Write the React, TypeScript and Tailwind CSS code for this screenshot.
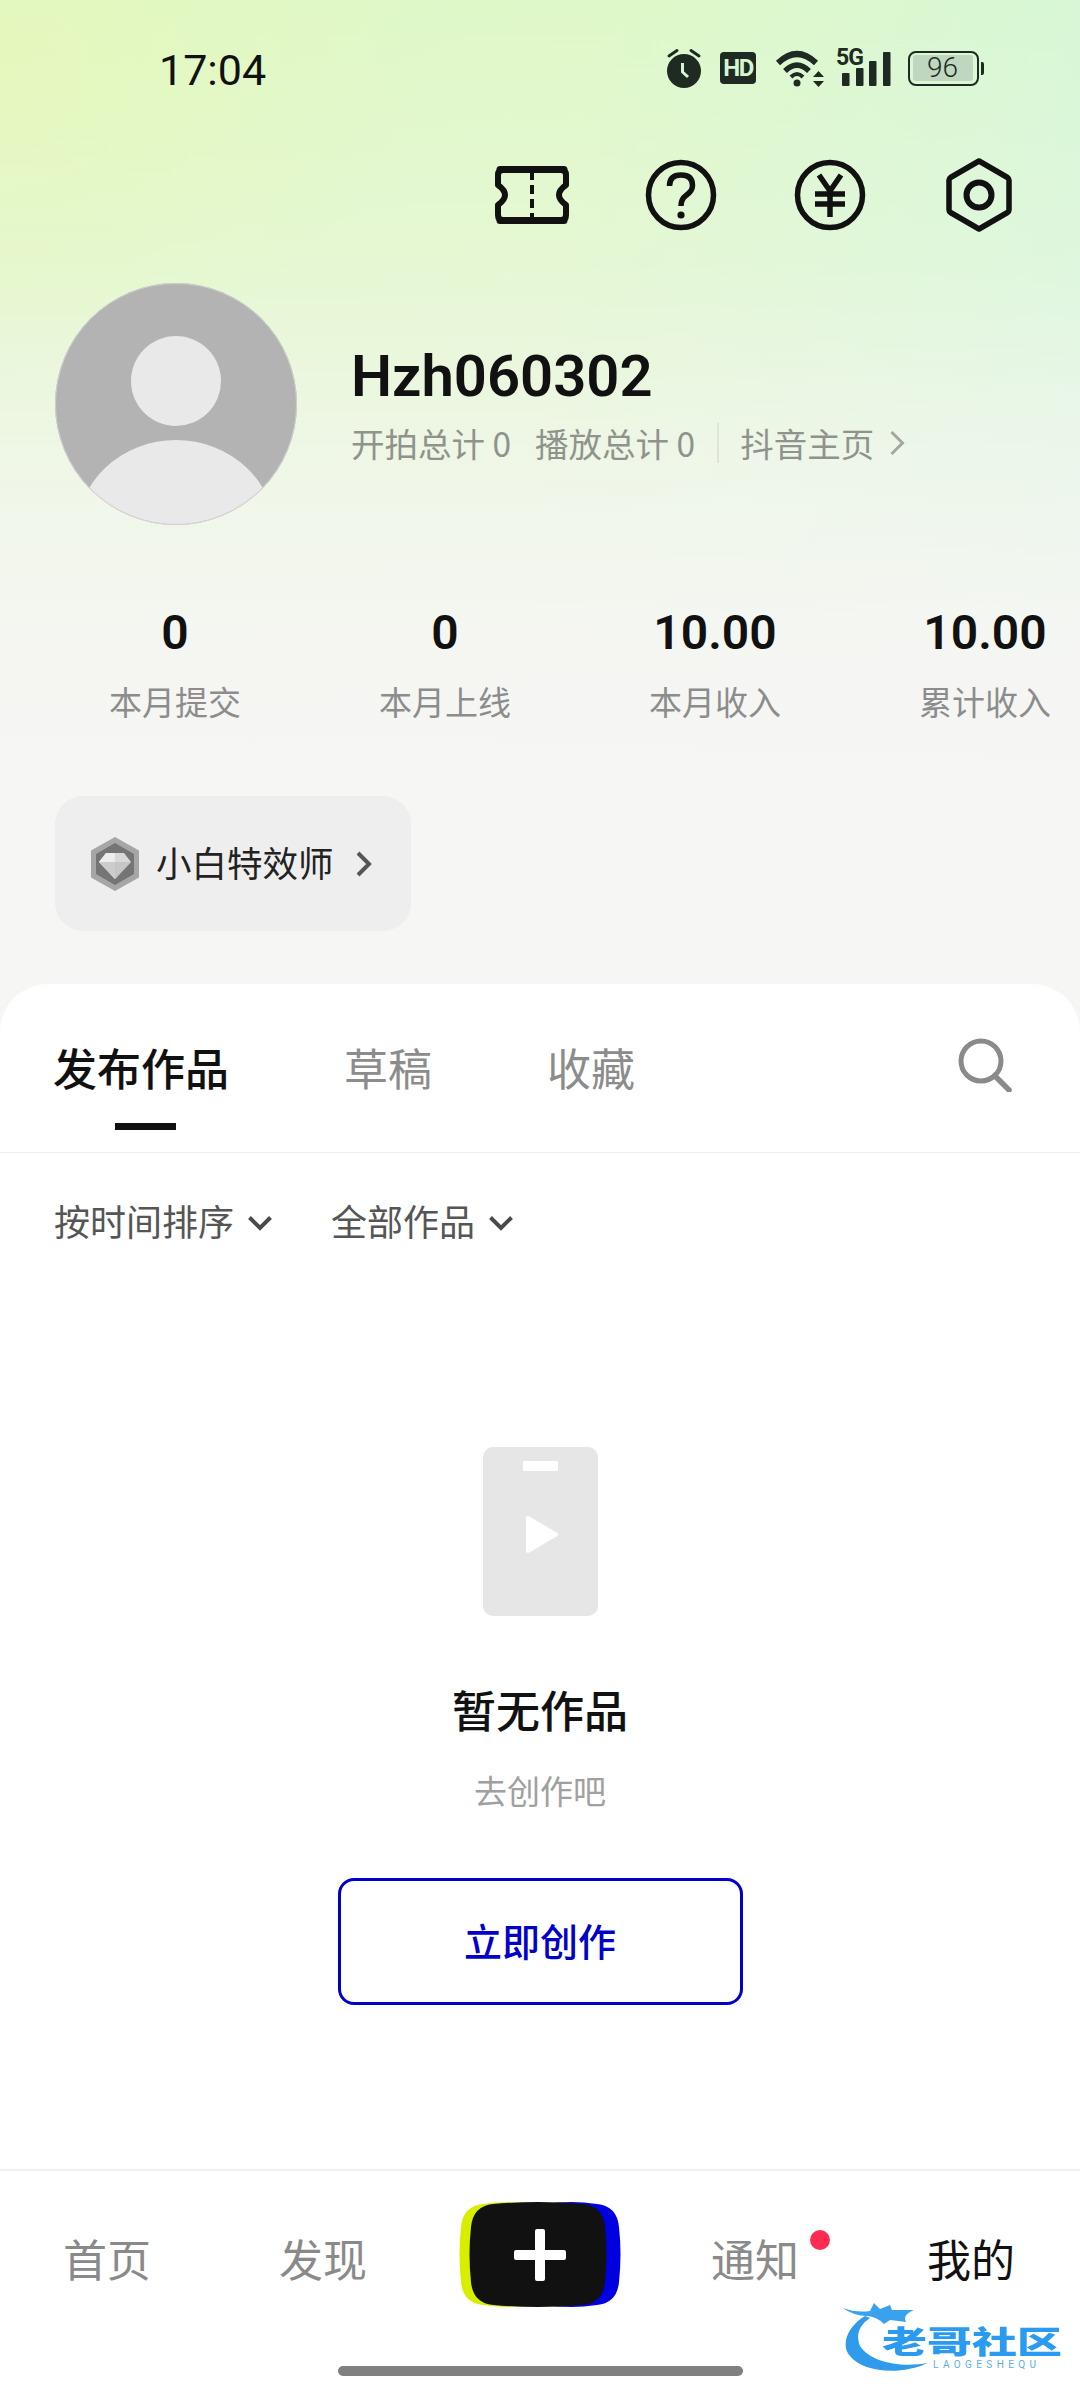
import React from "react";

const D = "#1e2a22";

function Alarm() {
  return (
    <svg width="36" height="40" viewBox="0 0 36 40" className="shrink-0">
      <circle cx="18" cy="23" r="17" fill={D} />
      <path d="M3 8 L11 2.5 M33 8 L25 2.5" stroke={D} strokeWidth="3" strokeLinecap="round" />
      <path d="M16.5 15 V24 L22 29" stroke="#d6f5d2" strokeWidth="3" fill="none" strokeLinejoin="round" />
    </svg>
  );
}

function HD() {
  return (
    <div className="flex h-[32px] w-[36px] shrink-0 items-center justify-center rounded-[4px] bg-[#1e2a22] text-[24px] leading-none font-bold tracking-[-1.5px] text-[#d6f5d2] [font-family:'Roboto',sans-serif]">
      HD
    </div>
  );
}

function Wifi() {
  return (
    <svg width="50" height="40" viewBox="0 0 50 40" className="shrink-0">
      <path d="M3 15 Q22 -3 41 15" stroke={D} strokeWidth="6" fill="none" />
      <path d="M10 23 Q22 11 34 23" stroke={D} strokeWidth="5.5" fill="none" />
      <path d="M16 29 Q22 23 28 29" stroke={D} strokeWidth="4" fill="none" />
      <circle cx="22" cy="35" r="3.5" fill={D} />
      <path d="M38 29 L49 29 L43.5 23 Z M38 33 L49 33 L43.5 39 Z" fill={D} />
    </svg>
  );
}

function Signal() {
  return (
    <svg width="54" height="36" viewBox="0 0 54 36" className="block shrink-0">
      <rect x="5" y="23" width="7.5" height="13" rx="1" fill={D} />
      <rect x="19" y="18" width="7.5" height="18" rx="1" fill={D} />
      <rect x="32" y="11" width="7.5" height="25" rx="1" fill={D} />
      <rect x="46" y="2" width="7.5" height="34" rx="1" fill={D} />
    </svg>
  );
}

function Battery() {
  return (
    <div className="flex shrink-0 items-center gap-[2px]">
      <div className="flex h-[35px] w-[71px] items-center rounded-[8px] border-[2.5px] border-[#1e2a22] p-[2.5px]">
        <div className="flex h-full w-[60px] items-center justify-center rounded-[3px] bg-[#bfd6bf] text-[28px] leading-none font-light text-[#1e2a22] [font-family:'Roboto',sans-serif]">
          96
        </div>
      </div>
      <div className="h-[13px] w-[3px] rounded-r-[2px] bg-[#1e2a22]" />
    </div>
  );
}

function Ticket() {
  return (
    <svg width="76" height="60" viewBox="0 0 76 60">
      <path
        d="M9 5 H67 Q72 5 72 10 V20 Q65 25 65 30 Q65 35 72 40 V50 Q72 55 67 55 H9 Q4 55 4 50 V40 Q11 35 11 30 Q11 25 4 20 V10 Q4 5 9 5 Z"
        fill="none"
        stroke="#111"
        strokeWidth="6"
        strokeLinejoin="round"
      />
      <path d="M6 4.5 H70 M6 55.5 H70" stroke="#111" strokeWidth="7" strokeLinecap="round" />
      <path d="M38 6 V55" stroke="#111" strokeWidth="4" strokeDasharray="9 5" />
    </svg>
  );
}

function Help() {
  return (
    <svg width="76" height="76" viewBox="0 0 76 76">
      <circle cx="38" cy="38" r="32.5" fill="none" stroke="#111" strokeWidth="5.5" />
      <path
        d="M26.5 29 Q26.5 18 38 18 Q49.5 18 49.5 28.5 Q49.5 34 43 38.5 Q38 42 38 49"
        fill="none"
        stroke="#111"
        strokeWidth="5.5"
      />
      <circle cx="38" cy="58" r="3.6" fill="#111" />
    </svg>
  );
}

function Yen() {
  return (
    <svg width="76" height="76" viewBox="0 0 76 76">
      <circle cx="38" cy="38" r="32.5" fill="none" stroke="#111" strokeWidth="5.5" />
      <path d="M27 18 L38 34 L49 18 M38 34 V60 M23 37 H53 M23 47 H53" fill="none" stroke="#111" strokeWidth="5.5" />
    </svg>
  );
}

function Gear() {
  return (
    <svg width="76" height="76" viewBox="0 0 76 76">
      <path d="M38 4 L66.5 20.5 Q68 21.5 68 23 V53 Q68 54.5 66.5 55.5 L38 72 L9.5 55.5 Q8 54.5 8 53 V23 Q8 21.5 9.5 20.5 Z" fill="none" stroke="#111" strokeWidth="5.5" strokeLinejoin="round" />
      <circle cx="38" cy="38" r="12.5" fill="none" stroke="#111" strokeWidth="6" />
    </svg>
  );
}

function Avatar() {
  return (
    <svg width="242" height="242" viewBox="0 0 242 242" className="shrink-0">
      <defs>
        <clipPath id="av">
          <circle cx="121" cy="121" r="121" />
        </clipPath>
      </defs>
      <circle cx="121" cy="121" r="121" fill="#b3b3b3" />
      <g clipPath="url(#av)">
        <ellipse cx="121" cy="98" rx="45" ry="45" fill="#e9e9e9" />
        <ellipse cx="121" cy="252" rx="100" ry="95" fill="#e9e9e9" />
      </g>
      <circle cx="121" cy="121" r="120.5" fill="none" stroke="#cfcfcf" strokeWidth="1" />
    </svg>
  );
}

function Chevron({ w, h, color, sw }: { w: number; h: number; color: string; sw: number }) {
  return (
    <svg width={w} height={h} viewBox="0 0 16 28" className="shrink-0">
      <path d="M2.5 3 L13.5 14 L2.5 25" fill="none" stroke={color} strokeWidth={sw} />
    </svg>
  );
}

function Down() {
  return (
    <svg width="26" height="16" viewBox="0 0 26 16" className="shrink-0">
      <path d="M2.5 2.5 L13 13 L23.5 2.5" fill="none" stroke="#4a4a4a" strokeWidth="4" />
    </svg>
  );
}

function Diamond() {
  return (
    <svg width="48" height="54" viewBox="0 0 48 54" className="shrink-0">
      <path d="M24 0 L48 13.5 V40.5 L24 54 L0 40.5 V13.5 Z" fill="#a6a6a6" />
      <path d="M24 6 L43 17 V37 L24 48 L5 37 V17 Z" fill="#757575" />
      <path d="M15 16 H33 L40 25 L24 42 L8 25 Z" fill="#d9d9d9" />
      <path d="M15 16 H24 V42 L8 25 Z" fill="#ededed" />
      <path d="M8 25 H40 L24 42 Z" fill="#bdbdbd" opacity="0.7" />
    </svg>
  );
}

function Stat({ n, l }: { n: string; l: string }) {
  return (
    <div className="flex flex-col items-center">
      <div className="h-[56px] text-[48px] leading-[56px] font-semibold text-[#111] [font-family:'Roboto',sans-serif]">{n}</div>
      <div className="mt-[18px] h-[44px] text-[33px] leading-[44px] whitespace-nowrap text-[#8c8c8c]">{l}</div>
    </div>
  );
}

function squircle(x0: number, x1: number) {
  const m = (x0 + x1) / 2;
  return `M${x0 + 24} 3 Q${m} -1 ${x1 - 24} 3 Q${x1 - 4} 5 ${x1 - 2} 26 Q${x1 + 1} 53 ${x1 - 2} 81 Q${x1 - 4} 102 ${x1 - 24} 104 Q${m} 108 ${x0 + 24} 104 Q${x0 + 4} 102 ${x0 + 2} 81 Q${x0 - 1} 53 ${x0 + 2} 26 Q${x0 + 4} 5 ${x0 + 24} 3 Z`;
}

function PlusButton() {
  return (
    <svg width="162" height="107" viewBox="0 0 162 107" className="overflow-visible">
      <path d={squircle(0, 100)} fill="#d8ee00" />
      <path d={squircle(62, 162)} fill="#0000e0" />
      <path d={squircle(10, 148)} fill="#111111" />
      <rect x="76" y="28" width="10" height="52" rx="2" fill="#fff" />
      <rect x="55" y="49" width="52" height="10" rx="2" fill="#fff" />
    </svg>
  );
}

function NavLabel({ t, active }: { t: string; active?: boolean }) {
  return (
    <div className={`mt-[27px] pr-[2px] text-center text-[44px] leading-[60px] ${active ? "text-[#111]" : "text-[#8a8a8a]"}`}>{t}</div>
  );
}

function Watermark() {
  return (
    <div className="absolute top-[2300px] left-[840px] h-[80px] w-[226px]">
      <svg width="110" height="80" viewBox="0 0 110 80" className="absolute top-0 left-0 blur-[0.6px]">
        <path d="M25 16 C8 26 0 45 10 56 C22 72 60 76 88 63 C60 68 30 62 20 46 C16 36 18 26 30 18 Z" fill="#2f9bea" />
        <path d="M3 8 Q16 13 30 11 L34 3 L40 9 L50 5 L52 10 L74 10 Q62 15 66 22 L50 20 L44 24 Q36 16 26 16 Q12 15 3 8 Z" fill="#3aa2ec" />
      </svg>
      <div className="absolute top-[22px] left-[42px] origin-center scale-y-[0.68] text-[45px] leading-[36px] font-black whitespace-nowrap text-[#2a9bf0]">
        老哥社区
      </div>
      <div className="absolute top-[60px] left-[93px] text-[10px] leading-[10px] tracking-[4.4px] whitespace-nowrap text-[#5aaee8] [font-family:'Roboto',sans-serif]">
        LAOGESHEQU
      </div>
    </div>
  );
}

export default function App() {
  return (
    <div className="relative flex h-[2400px] w-[1080px] flex-col overflow-hidden bg-[radial-gradient(ellipse_420px_300px_at_0px_60px,rgba(232,248,180,0.55),rgba(232,248,180,0)),linear-gradient(180deg,rgba(246,246,244,0)_0px,rgba(246,246,244,0.25)_260px,rgba(246,246,244,0.68)_450px,rgba(246,246,244,0.95)_640px,#f6f6f4_800px),linear-gradient(100deg,#dff8c6_0%,#dff8c8_40%,#d8f7d4_70%,#cef5e0_100%)] [font-family:'Noto_Sans_CJK_SC',sans-serif]">
      <div className="flex h-[136px] shrink-0 items-center justify-between pr-[96px] pl-[159px]">
        <div className="mt-[5px] text-[43px] leading-none text-[#111] [font-family:'Roboto',sans-serif]">17:04</div>
        <div className="flex items-center">
          <Alarm />
          <div className="ml-[18px]"><HD /></div>
          <div className="ml-[19px]"><Wifi /></div>
          <div className="relative ml-[12px]">
            <Signal />
            <span className="absolute top-[-4px] left-[-1px] text-[23px] leading-none font-bold tracking-[-1px] text-[#1e2a22] [font-family:'Roboto',sans-serif]">5G</span>
          </div>
          <div className="ml-[17px]"><Battery /></div>
        </div>
      </div>

      <div className="flex h-[118px] shrink-0 items-center justify-end gap-[73px] pr-[63px]">
        <Ticket />
        <Help />
        <Yen />
        <Gear />
      </div>

      <div className="mt-[29px] flex shrink-0 items-center px-[55px]">
        <Avatar />
        <div className="ml-[54px] flex flex-col">
          <div className="text-[58px] leading-[64px] font-semibold text-[#111] [font-family:'Roboto',sans-serif]">Hzh060302</div>
          <div className="mt-[13px] flex items-center text-[33.5px] leading-[44px] text-[#8f938c]">
            <span>开拍总计 0</span>
            <span className="ml-[24px]">播放总计 0</span>
            <span className="mr-[21px] ml-[22px] h-[40px] w-[2px] bg-[#dfe3da]" />
            <span>抖音主页</span>
            <span className="ml-[15px]"><Chevron w={16} h={28} color="#a3a79f" sw={3} /></span>
          </div>
        </div>
      </div>

      <div className="mt-[80px] grid w-[1080px] shrink-0 grid-cols-[270px_270px_270px_270px] pl-[40px]">
        <Stat n="0" l="本月提交" />
        <Stat n="0" l="本月上线" />
        <Stat n="10.00" l="本月收入" />
        <Stat n="10.00" l="累计收入" />
      </div>

      <div className="mt-[73px] ml-[55px] flex h-[135px] w-[356px] shrink-0 items-center rounded-[28px] bg-[#eeeeee] pl-[36px]">
        <Diamond />
        <span className="mt-[-3px] ml-[17px] text-[35.5px] leading-none whitespace-nowrap text-[#222]">小白特效师</span>
        <span className="ml-[21px]"><Chevron w={17} h={28} color="#555" sw={4} /></span>
      </div>

      <div className="mt-[53px] flex min-h-0 flex-1 flex-col rounded-t-[48px] bg-white">
        <div className="flex h-[169px] shrink-0 items-start justify-between border-b-[1px] border-[#eeeeee] pr-[68px] pl-[53px]">
          <div className="flex gap-[115px]">
            <div className="flex flex-col items-center pt-[53px]">
              <div className="h-[60px] text-[44px] leading-[60px] font-medium text-[#111]">发布作品</div>
              <div className="mt-[26px] ml-[8px] h-[7px] w-[61px] bg-[#111]" />
            </div>
            <div className="pt-[53px] text-[44px] leading-[60px] text-[#8c8c8c]">草稿</div>
            <div className="pt-[53px] text-[44px] leading-[60px] text-[#8c8c8c]">收藏</div>
          </div>
          <div className="pt-[54px]">
            <svg width="54" height="54" viewBox="0 0 54 54">
              <circle cx="23" cy="23" r="20" fill="none" stroke="#8a8a8a" strokeWidth="5" />
              <path d="M37 38 L51 52" stroke="#8a8a8a" strokeWidth="5.5" strokeLinecap="round" />
            </svg>
          </div>
        </div>

        <div className="flex h-[140px] shrink-0 items-center pr-[55px] pl-[54px] text-[36px] text-[#555]">
          <span className="mt-[-6px] leading-none">按时间排序</span>
          <span className="ml-[13px]"><Down /></span>
          <span className="mt-[-6px] ml-[58px] leading-none">全部作品</span>
          <span className="ml-[13px]"><Down /></span>
        </div>

        <div className="mt-[154px] flex shrink-0 flex-col items-center">
          <div className="relative flex h-[169px] w-[115px] items-center justify-center rounded-[10px] bg-[#e6e6e6]">
            <div className="absolute top-[14px] left-[40px] h-[10px] w-[35px] rounded-[1px] bg-white" />
            <svg width="34" height="39" viewBox="0 0 34 39" className="mt-[6px] ml-[4px]">
              <path d="M3 3 L31 19.5 L3 36 Z" fill="#fff" stroke="#fff" strokeWidth="4" strokeLinejoin="round" />
            </svg>
          </div>
          <div className="mt-[63px] h-[60px] text-[44px] leading-[60px] font-medium text-[#111]">暂无作品</div>
          <div className="mt-[29px] h-[44px] text-[33px] leading-[44px] text-[#a0a0a0]">去创作吧</div>
          <div className="mt-[66px] flex h-[127px] w-[405px] items-center justify-center rounded-[16px] border-[3px] border-[#0000c8] pb-[4px] text-[38px] font-medium text-[#0000c8]">
            立即创作
          </div>
        </div>

        <div className="mt-auto flex h-[231px] shrink-0 flex-col border-t-[2px] border-[#f0f0f0]">
          <div className="grid h-[195px] grid-cols-5 pt-[30px]">
            <NavLabel t="首页" />
            <NavLabel t="发现" />
            <div className="flex justify-center"><PlusButton /></div>
            <div className="relative">
              <NavLabel t="通知" />
              <div className="absolute top-[29px] left-[162px] h-[20px] w-[20px] rounded-full bg-[#fe2c55]" />
            </div>
            <NavLabel t="我的" active />
          </div>
          <div className="h-[10px] w-[405px] self-center rounded-full bg-[#808080]" />
        </div>
      </div>

      <Watermark />
    </div>
  );
}
